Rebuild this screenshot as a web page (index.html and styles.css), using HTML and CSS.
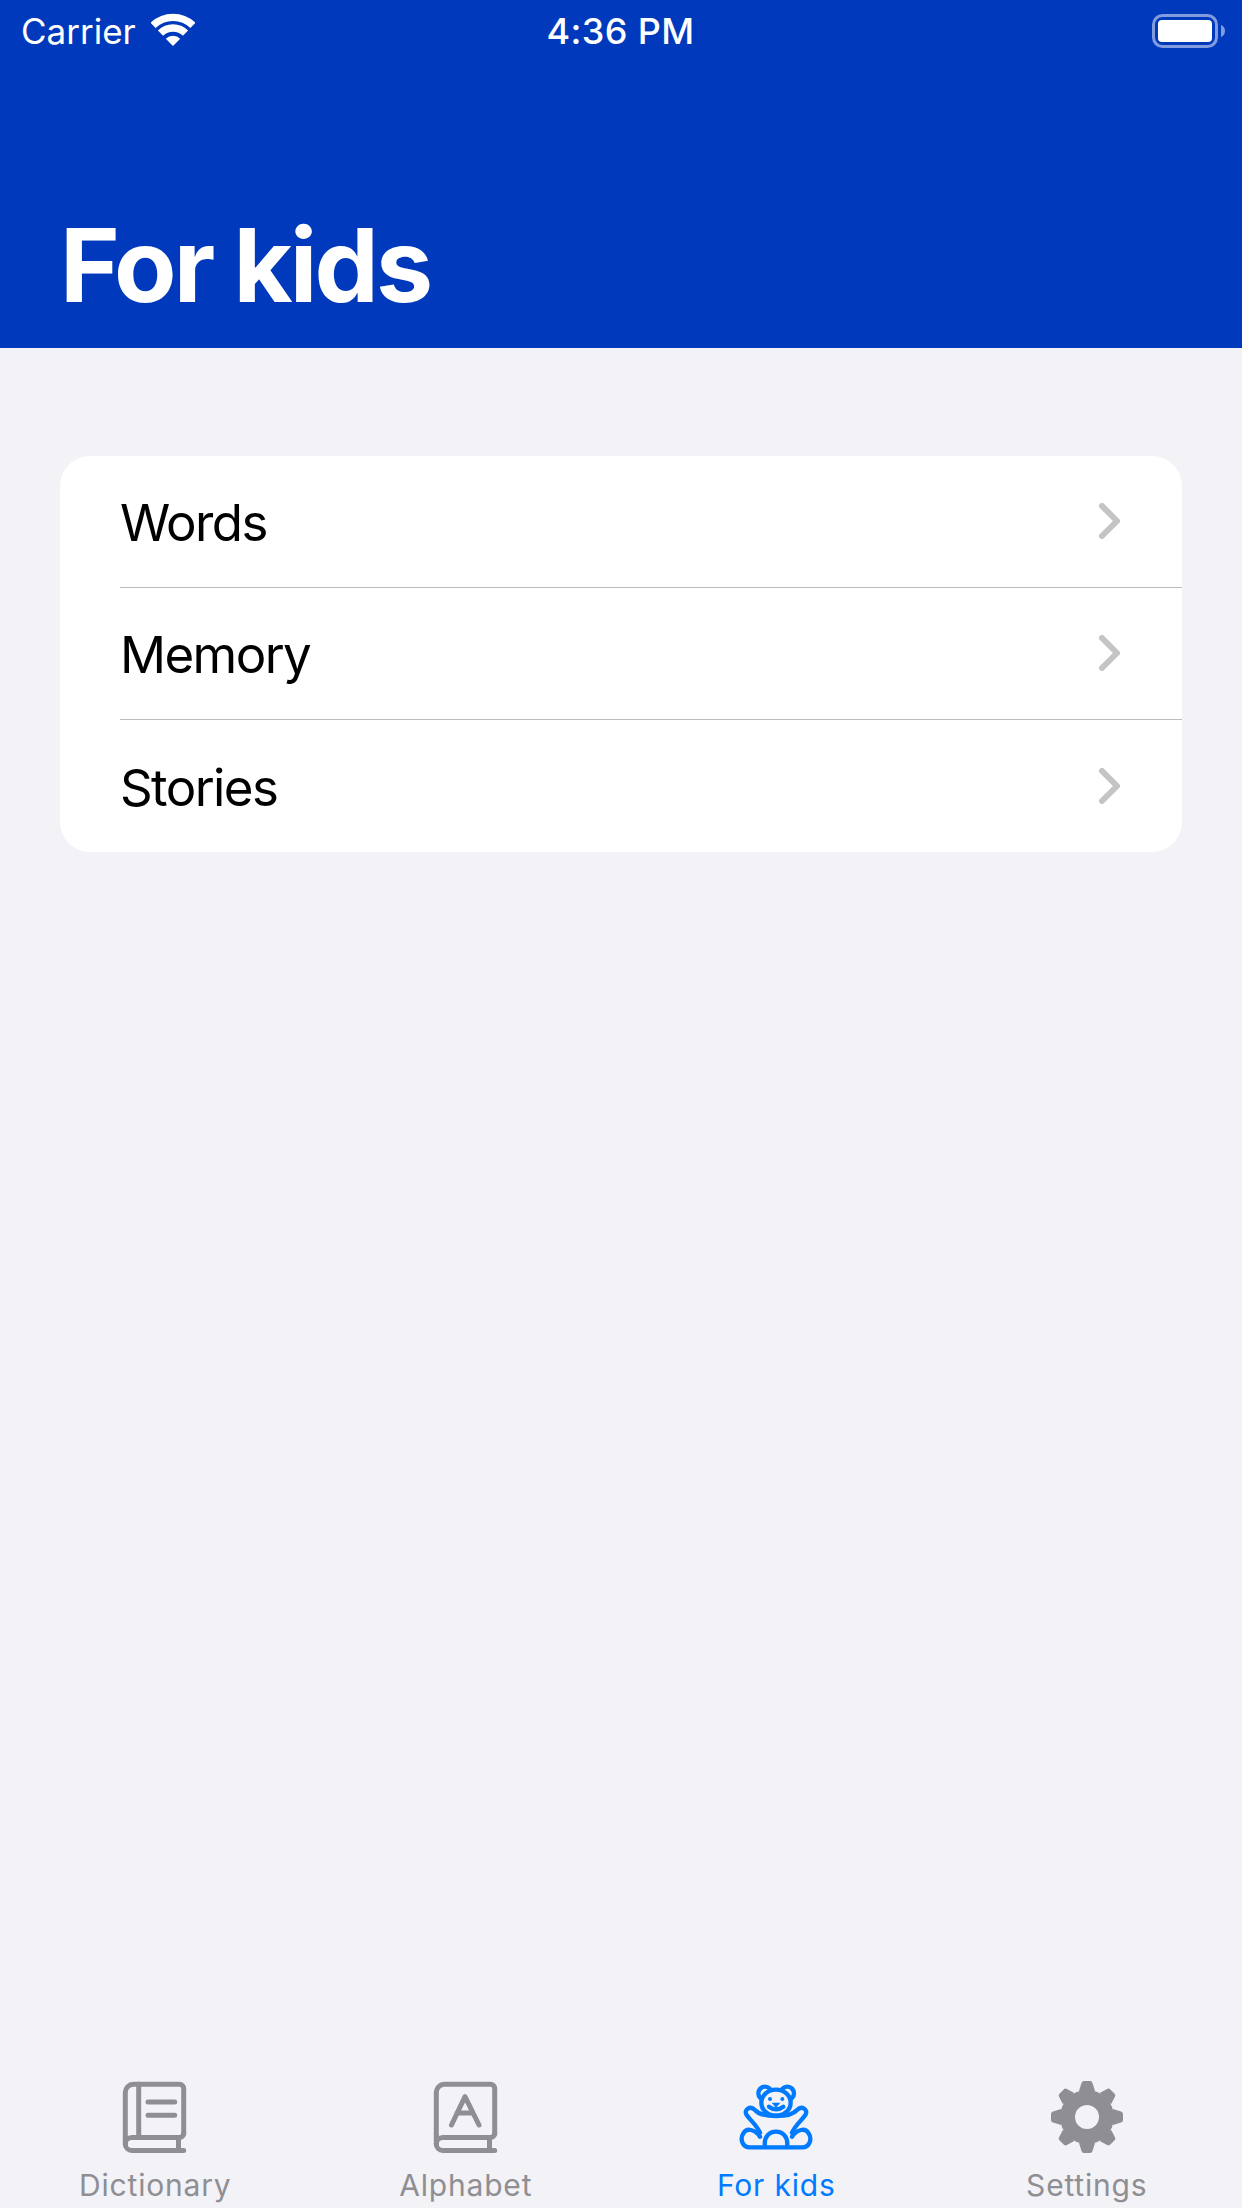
FILE: index.html
```html
<!DOCTYPE html>
<html lang="en">
  <head>
    <meta charset="UTF-8" />
    <meta name="viewport" content="width=device-width, initial-scale=1.0" />
    <title>For kids</title>
    <link rel="stylesheet" href="styles.css">
  </head>
  <body>
    <header class="nav-header">
      <div class="status-bar">
        <div class="status-left">
          <span>Carrier</span>
          <svg class="wifi-icon" width="44" height="33" viewBox="0 0 44 33" aria-hidden="true">
            <path class="wifi-band" d="M2.1 12.4A28.7 28.7 0 0 1 41.9 12.4" />
            <path class="wifi-band" d="M9.5 20.1A18 18 0 0 1 34.5 20.1" />
            <path class="wifi-dot" d="M22 33L14.8 25.8A10.2 10.2 0 0 1 29.2 25.8Z" />
          </svg>
        </div>
        <div class="status-time">4:36 PM</div>
        <div class="status-right">
          <svg width="74" height="34" viewBox="0 0 74 34" aria-hidden="true">
            <rect class="battery-shell" x="1.5" y="1.5" width="63" height="31" rx="9" />
            <rect class="battery-level" x="6" y="6" width="54" height="22" rx="4" />
            <path class="battery-cap" d="M69 11c3 1 4 3.500 4 6s-1 5-4 6Z" />
          </svg>
        </div>
      </div>
      <h1 class="page-title">For kids</h1>
    </header>

    <main class="content">
      <ul class="menu-list">
        <li class="menu-item">
          <span>Words</span>
          <svg class="chevron" width="21" height="36" viewBox="0 0 21 36" aria-hidden="true"><path d="M3 3L18 18L3 33" /></svg>
        </li>
        <li class="menu-item">
          <span>Memory</span>
          <svg class="chevron" width="21" height="36" viewBox="0 0 21 36" aria-hidden="true"><path d="M3 3L18 18L3 33" /></svg>
        </li>
        <li class="menu-item">
          <span>Stories</span>
          <svg class="chevron" width="21" height="36" viewBox="0 0 21 36" aria-hidden="true"><path d="M3 3L18 18L3 33" /></svg>
        </li>
      </ul>
    </main>

    <nav class="tab-bar">
      <div class="tab">
        <svg class="tab-icon" width="72" height="80" viewBox="0 0 72 80" aria-hidden="true">
          <path d="M64.700 56V10.500a4.200 4.200 0 0 0-4.200-4.200H14.300a8 8 0 0 0-8 8V66a6.500 6.500 0 0 0 6.500 6.500H64.700" />
          <path d="M6.300 66a6.500 6.500 0 0 1 6.500-6.500H60.500a4.200 4.200 0 0 0 4.200-4.200" />
          <path d="M19.700 6.300V59.500M59.500 59.500V72.500M29 24H55.700M29 37.300H55.700" />
        </svg>
        <span class="tab-label">Dictionary</span>
      </div>
      <div class="tab">
        <svg class="tab-icon" width="72" height="80" viewBox="0 0 72 80" aria-hidden="true">
          <path d="M64.700 56V10.500a4.200 4.200 0 0 0-4.200-4.200H14.300a8 8 0 0 0-8 8V66a6.500 6.500 0 0 0 6.500 6.500H64.700" />
          <path d="M6.300 66a6.500 6.500 0 0 1 6.500-6.500H60.500a4.200 4.200 0 0 0 4.200-4.200" />
          <path d="M59.500 59.500V72.500M21.500 47L35 18.700L49 47M27 35H43" />
        </svg>
        <span class="tab-label">Alphabet</span>
      </div>
      <div class="tab tab-active">
        <svg class="tab-icon" width="78" height="80" viewBox="111 24 234 240" aria-hidden="true">
          <circle cx="195" cy="70" r="20" />
          <circle cx="262" cy="70" r="20" />
          <ellipse class="bear-head" cx="228" cy="98" rx="44" ry="39" />
          <circle class="bear-dot" cx="210" cy="87" r="6" />
          <circle class="bear-dot" cx="247" cy="87" r="6" />
          <path class="bear-dot" d="M215 98H241L228 113Z" />
          <path d="M207 110Q228 126 250 110" />
          <path d="M180 188C170 165 150 150 140 135C130 120 150 105 165 120C185 144 271 144 291 120C306 105 326 120 316 135C306 150 286 165 276 188" />
          <path d="M150 232H306C331 232 336 205 326 190C316 172 291 178 276 200M180 200C165 178 140 172 130 190C120 205 125 232 150 232" />
          <path d="M195 230C185 170 271 170 261 230" />
        </svg>
        <span class="tab-label">For kids</span>
      </div>
      <div class="tab">
        <svg class="tab-icon gear-icon" width="72" height="80" viewBox="-36 -39 72 80" aria-hidden="true">
          <circle r="27" />
          <path d="M-8-26L-5.500-34Q-5-36-3-36H3Q5-36 5.500-34L8-26Z" />
          <path transform="rotate(45)" d="M-8-26L-5.500-34Q-5-36-3-36H3Q5-36 5.500-34L8-26Z" />
          <path transform="rotate(90)" d="M-8-26L-5.500-34Q-5-36-3-36H3Q5-36 5.500-34L8-26Z" />
          <path transform="rotate(135)" d="M-8-26L-5.500-34Q-5-36-3-36H3Q5-36 5.500-34L8-26Z" />
          <path transform="rotate(180)" d="M-8-26L-5.500-34Q-5-36-3-36H3Q5-36 5.500-34L8-26Z" />
          <path transform="rotate(225)" d="M-8-26L-5.500-34Q-5-36-3-36H3Q5-36 5.500-34L8-26Z" />
          <path transform="rotate(270)" d="M-8-26L-5.500-34Q-5-36-3-36H3Q5-36 5.500-34L8-26Z" />
          <path transform="rotate(315)" d="M-8-26L-5.500-34Q-5-36-3-36H3Q5-36 5.500-34L8-26Z" />
          <circle class="gear-hole" r="12" />
        </svg>
        <span class="tab-label">Settings</span>
      </div>
    </nav>
  </body>
</html>
```

FILE: styles.css
```css
:root {
  --header-blue: #0039bb;
  --page-bg: #f2f2f7;
  --tab-gray: #8e8e93;
  --tab-blue: #007aff;
  --separator: #bcbcc0;
  --chevron: #c4c4c7;
}

* {
  box-sizing: border-box;
}

body {
  margin: 0;
  width: 1242px;
  height: 2208px;
  display: flex;
  flex-direction: column;
  overflow: hidden;
  font-family: Inter, "Liberation Sans", sans-serif;
  background-color: var(--page-bg);
  color: #000;
}

.nav-header {
  height: 348px;
  padding-top: 8px;
  display: flex;
  flex-direction: column;
  background-color: var(--header-blue);
  color: #fff;
}

.status-bar {
  display: grid;
  grid-template-columns: 1fr auto 1fr;
  align-items: center;
  height: 46px;
  padding: 0 16px 0 21px;
  font-size: 35px;
}

.status-left {
  display: flex;
  align-items: center;
  gap: 15px;
}

.wifi-icon {
  margin-top: -4px;
}

.wifi-band {
  fill: none;
  stroke: #fff;
  stroke-width: 7.4;
}

.wifi-dot {
  fill: #fff;
}

.status-time {
  padding-right: 6px;
  font-size: 36px;
  font-weight: 500;
  letter-spacing: 0.4px;
}

.status-right {
  display: flex;
  justify-content: flex-end;
}

.battery-shell {
  fill: none;
  stroke: rgba(255, 255, 255, 0.5);
  stroke-width: 3;
}

.battery-level {
  fill: #fff;
}

.battery-cap {
  fill: rgba(255, 255, 255, 0.5);
}

.page-title {
  margin: auto 0 21px;
  padding-left: 60px;
  font-size: 102px;
  line-height: 124px;
  font-weight: 700;
  letter-spacing: -2.9px;
}

.content {
  flex: 1;
  padding: 108px 60px 0;
}

.menu-list {
  margin: 0;
  padding: 0;
  list-style: none;
  background-color: #fff;
  border-radius: 30px;
  overflow: hidden;
}

.menu-item {
  height: 132px;
  margin-left: 60px;
  padding: 2px 62px 0 0;
  display: flex;
  justify-content: space-between;
  align-items: center;
  font-size: 51px;
  letter-spacing: -1.6px;
  border-bottom: 1px solid var(--separator);
}

.menu-item:last-child {
  border-bottom: none;
}

.chevron {
  margin-top: -3px;
}

.chevron path {
  fill: none;
  stroke: var(--chevron);
  stroke-width: 6;
  stroke-linecap: round;
  stroke-linejoin: round;
}

.tab-bar {
  display: grid;
  grid-template-columns: repeat(4, 1fr);
  height: 130px;
}

.tab {
  display: flex;
  flex-direction: column;
  align-items: center;
  color: var(--tab-gray);
}

.tab-active {
  color: var(--tab-blue);
}

.tab-icon {
  flex-shrink: 0;
  fill: none;
  stroke: currentColor;
  stroke-width: 5;
  stroke-linecap: round;
  stroke-linejoin: round;
}

.tab-active .tab-icon {
  stroke-width: 13;
}

.bear-head {
  fill: var(--page-bg);
}

.bear-dot {
  fill: currentColor;
  stroke: none;
}

.gear-icon {
  fill: currentColor;
  stroke: none;
}

.gear-hole {
  fill: var(--page-bg);
}

.tab-label {
  margin-top: 9px;
  font-size: 30px;
  line-height: 36px;
  letter-spacing: 0.8px;
  font-weight: 400;
  white-space: nowrap;
}
```
